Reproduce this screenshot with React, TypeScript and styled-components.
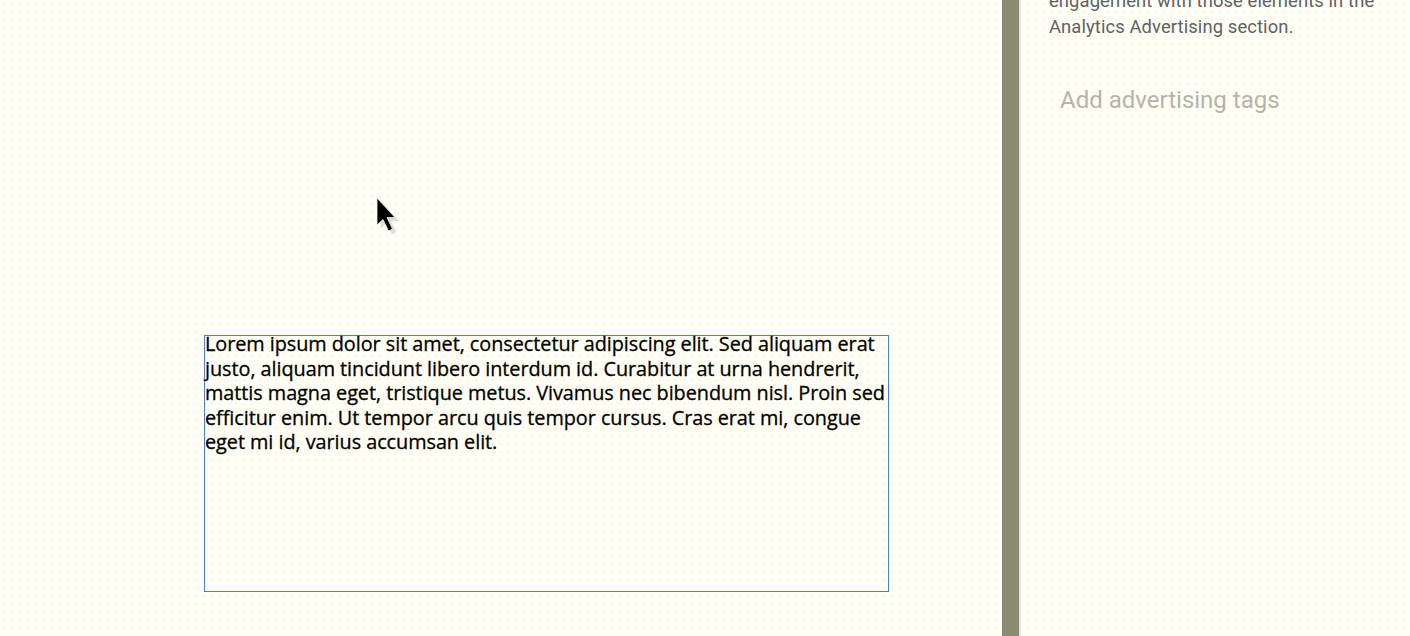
import * as React from "react";
import styled, { createGlobalStyle } from "styled-components";

const GlobalStyle = createGlobalStyle`
  html, body {
    margin: 0;
    padding: 0;
    height: 100%;
    overflow: hidden;
  }
  #root {
    height: 100%;
  }
`;

const paper = "#fffff7";

const loremLines = [
  "Lorem ipsum dolor sit amet, consectetur adipiscing elit. Sed aliquam erat",
  "justo, aliquam tincidunt libero interdum id. Curabitur at urna hendrerit,",
  "mattis magna eget, tristique metus. Vivamus nec bibendum nisl. Proin sed",
  "efficitur enim. Ut tempor arcu quis tempor cursus. Cras erat mi, congue",
  "eget mi id, varius accumsan elit.",
];

const Page = styled.div`
  display: flex;
  width: 1410px;
  height: 636px;
  background-color: ${paper};
  background-image: radial-gradient(circle, rgba(245, 240, 110, 0.35) 0.7px, transparent 1.1px);
  background-size: 8px 8px;
  overflow: hidden;
`;

const Canvas = styled.main`
  position: relative;
  flex: 0 0 1002px;
  box-sizing: border-box;
  padding: 335px 0 0 204px;
`;

const TextFrame = styled.div`
  box-sizing: border-box;
  width: 685px;
  height: 257px;
  border: 1px solid #4b7fd6;
  font-family: "Open Sans", "Noto Sans", sans-serif;
  font-size: 19.85px;
  line-height: 24.55px;
  color: #000;
  letter-spacing: -0.05px;
  -webkit-text-stroke: 0.3px #000;
`;

const FrameText = styled.p`
  margin: -4px 0 0;
`;

const FrameLine = styled.span`
  display: block;
  white-space: nowrap;
`;

const Pointer = styled.svg`
  position: absolute;
  left: 372px;
  top: 194px;
  width: 30px;
  height: 44px;
`;

const Splitter = styled.div`
  flex: 0 0 17px;
  background-color: #8b8a72;
  border-right: 2px solid #e6e6de;
`;

const Sidebar = styled.aside`
  flex: 1;
  box-sizing: border-box;
  padding: 0 10px 0 28px;
  font-family: Roboto, "Noto Sans", sans-serif;
`;

const Note = styled.p`
  margin: -12px 0 0;
  font-size: 18.4px;
  line-height: 26px;
  color: #5e6164;
  letter-spacing: 0.1px;
  white-space: nowrap;
`;

const TagInput = styled.div`
  margin: 44px 0 0 11px;
  font-size: 24px;
  line-height: 32px;
  color: #b4b4a8;
`;

function ArrowCursor() {
  return (
    <Pointer viewBox="0 0 30 44">
      <path
        d="M7 5 L7 33 L13 27.5 L18.5 39 L23 37 L17.5 25.5 L25.5 25.5 Z"
        fill="#d6d6d0"
        opacity="0.8"
        transform="translate(1.5 1.5)"
      />
      <path
        d="M5 4 L5 31 L11 25.5 L16.5 37 L20.5 35 L15 23.5 L23 23.5 Z"
        fill="#000"
        stroke="#f2f2ea"
        strokeWidth="0.8"
      />
    </Pointer>
  );
}

export default function App() {
  return (
    <>
      <GlobalStyle />
      <Page>
        <Canvas>
          <ArrowCursor />
          <TextFrame>
            <FrameText>
              {loremLines.map((line) => (
                <FrameLine key={line}>{line}</FrameLine>
              ))}
            </FrameText>
          </TextFrame>
        </Canvas>
        <Splitter />
        <Sidebar>
          <Note>
            engagement with those elements in the
            <br />
            Analytics Advertising section.
          </Note>
          <TagInput>Add advertising tags</TagInput>
        </Sidebar>
      </Page>
    </>
  );
}
